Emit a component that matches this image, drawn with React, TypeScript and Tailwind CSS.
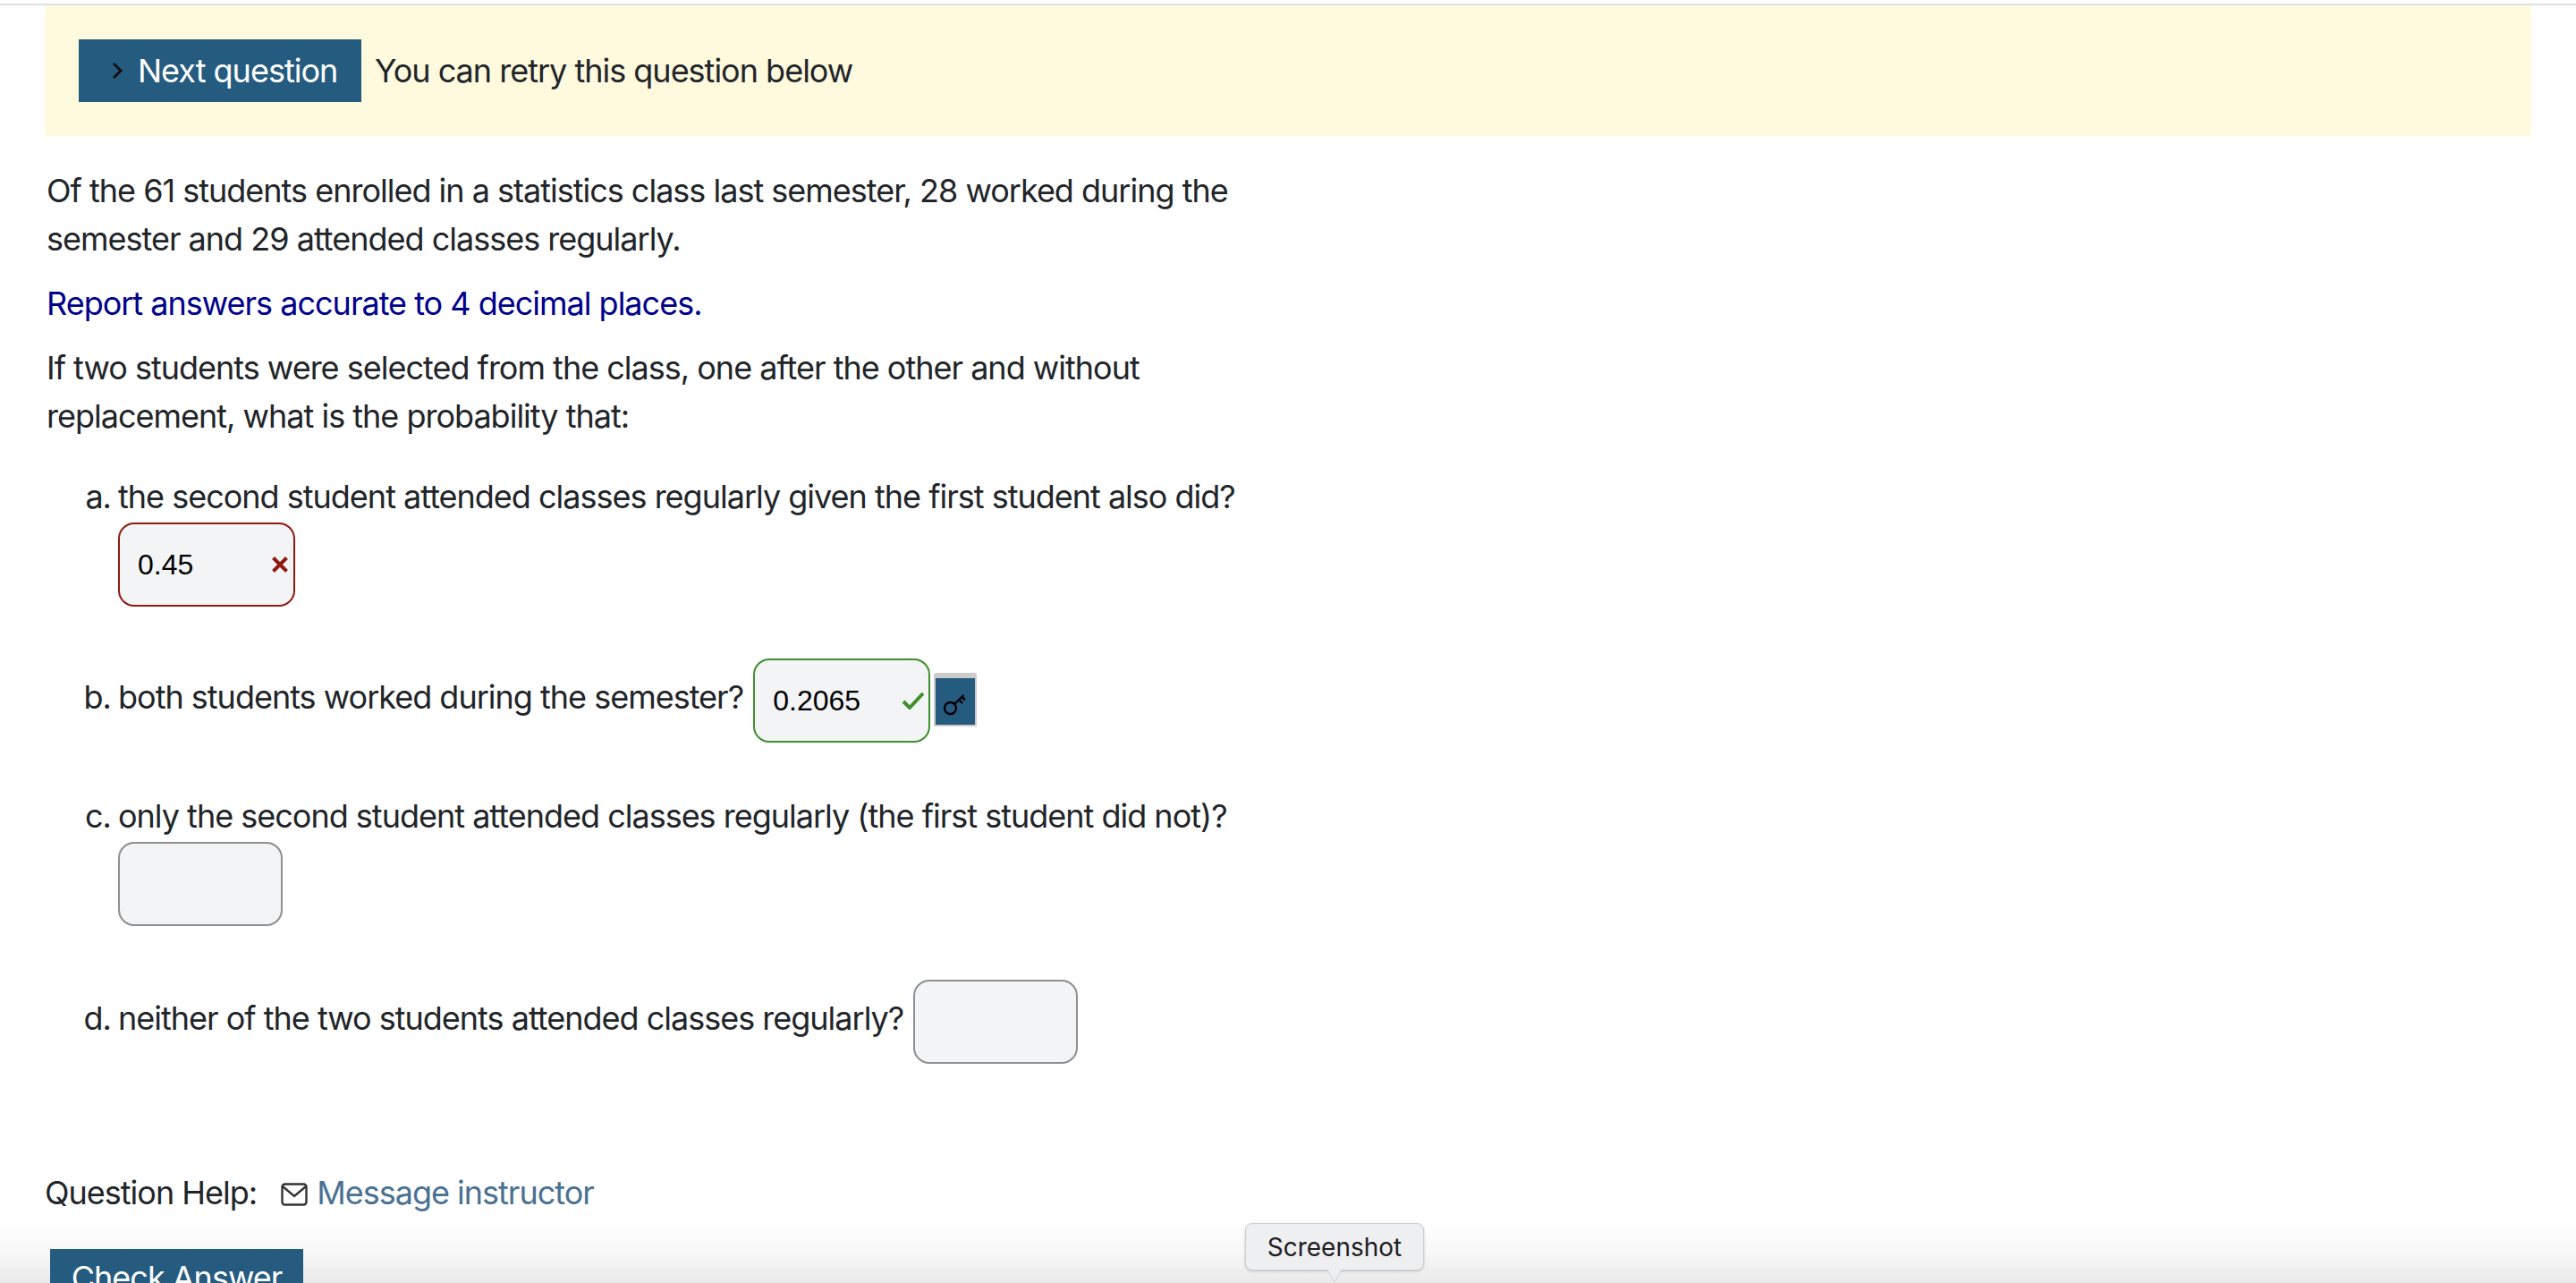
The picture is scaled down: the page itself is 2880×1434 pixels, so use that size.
import React from "react";

function Field({ value, state, w, extra = "" }: { value?: string; state?: "bad" | "good"; w: string; extra?: string }) {
  const border = state === "bad" ? "border-[#8f1a12]" : state === "good" ? "border-[#3f8f2d]" : "border-[#8f8f8f]";
  return (
    <span className={`inline-flex items-center justify-between mt-[2px] h-[94px] ${w} ${extra} ${border} border-2 rounded-[18px] bg-[#f3f4f6] pl-[20px] pr-[4px] align-middle font-['Liberation_Sans',sans-serif] text-[32px] tracking-normal text-black`}>
      <span>{value}</span>
      {state === "bad" && (
        <svg width="20" height="20" viewBox="0 0 20 20" className="mr-[1px]">
          <path d="M2.5 2.5 17.5 17.5M17.5 2.5 2.5 17.5" stroke="#8f1a12" strokeWidth="4" fill="none" />
        </svg>
      )}
      {state === "good" && (
        <svg width="26" height="20" viewBox="0 0 26 20">
          <path d="M2 11 9 18 24 2" stroke="#3f8f2d" strokeWidth="4" fill="none" />
        </svg>
      )}
    </span>
  );
}

function KeyButton() {
  return (
    <span className="inline-flex items-center justify-center align-middle ml-[4px] w-[48px] h-[60px] bg-[#265b80] border-2 border-[#cccccc] border-t-[6px] rounded-t-[3px]">
      <svg width="28" height="28" viewBox="0 0 28 28" className="mt-[4px]">
        <circle cx="8.5" cy="19.5" r="6.5" stroke="#000" strokeWidth="2.4" fill="none" />
        <path d="M13 15 23.5 5M18 10l4 4M21.5 7l3.5 3.5" stroke="#000" strokeWidth="2.4" fill="none" />
      </svg>
    </span>
  );
}

export default function App() {
  return (
    <div className="relative h-[1434px] overflow-hidden bg-white font-['Inter',sans-serif] text-[36px] leading-[54px] tracking-[-1px] text-[#212529]">
      <div className="mt-[4px] h-[2px] bg-[#e0e0e0]" />
      <div className="ml-[50px] mr-[50px] h-[146px] bg-[#fff9de] flex items-center pl-[38px]">
        <button className="flex items-center h-[70px] w-[316px] bg-[#265b80] text-white pl-[36px]">
          <svg width="14" height="20" viewBox="0 0 14 20" className="mr-[16px]">
            <path d="M3 2 11 10 3 18" stroke="#111" strokeWidth="3" fill="none" />
          </svg>
          Next question
        </button>
        <span className="ml-[15px]">You can retry this question below</span>
      </div>

      <div className="ml-[52px] w-[1370px] mt-[34px]">
        <p>Of the 61 students enrolled in a statistics class last semester, 28 worked during the semester and 29 attended classes regularly.</p>
        <p className="mt-[18px] text-[#00008b]">Report answers accurate to 4 decimal places.</p>
        <p className="mt-[18px]">If two students were selected from the class, one after the other and without replacement, what is the probability that:</p>
        <ol className="list-[lower-alpha] pl-[80px] mt-[36px]">
          <li>
            the second student attended classes regularly given the first student also did? <Field value="0.45" state="bad" w="w-[198px]" />
          </li>
          <li className="mt-[56px]">
            both students worked during the semester? <Field value="0.2065" state="good" w="w-[198px]" extra="ml-[2px]" />
            <KeyButton />
          </li>
          <li className="mt-[55px]">
            only the second student attended classes regularly (the first student did not)? <Field w="w-[184px]" />
          </li>
          <li className="mt-[58px]">
            neither of the two students attended classes regularly? <Field w="w-[184px]" extra="ml-[2px]" />
          </li>
        </ol>
      </div>

      <div className="ml-[50px] mt-[117px] flex items-center">
        <span>Question Help:</span>
        <svg width="30" height="26" viewBox="0 0 30 26" className="ml-[27px] mr-[10px] mt-[3px]">
          <rect x="1.5" y="1.5" width="27" height="23" rx="3" stroke="#333" strokeWidth="2.4" fill="none" />
          <path d="M2 4 15 15 28 4" stroke="#333" strokeWidth="2.4" fill="none" />
        </svg>
        <span className="text-[#4a7191]">Message instructor</span>
      </div>

      <button className="relative z-10 ml-[56px] mt-[36px] block h-[64px] w-[283px] bg-[#265b80] text-white">Check Answer</button>

      <div className="absolute left-0 right-0 bottom-0 h-[70px] bg-gradient-to-b from-[#ffffff00] via-[#f8f8f8] to-[#e9e9e9]" />

      <div className="absolute z-20 left-[1392px] top-[1367px] w-[200px] h-[53px] rounded-[8px] bg-[#eeeff1] border border-[#d0d0d0] shadow-[0_1px_3px_rgba(0,0,0,0.2)] flex items-center justify-center text-[28px] tracking-normal leading-none text-[#1d1d1f]">
        Screenshot
      </div>
      <svg width="40" height="15" viewBox="0 0 40 15" className="absolute z-20 left-[1472px] top-[1419px]">
        <path d="M0 0 12 0 20 14 28 0 40 0" fill="#eeeff1" stroke="#d0d0d0" strokeWidth="1" />
      </svg>
    </div>
  );
}
